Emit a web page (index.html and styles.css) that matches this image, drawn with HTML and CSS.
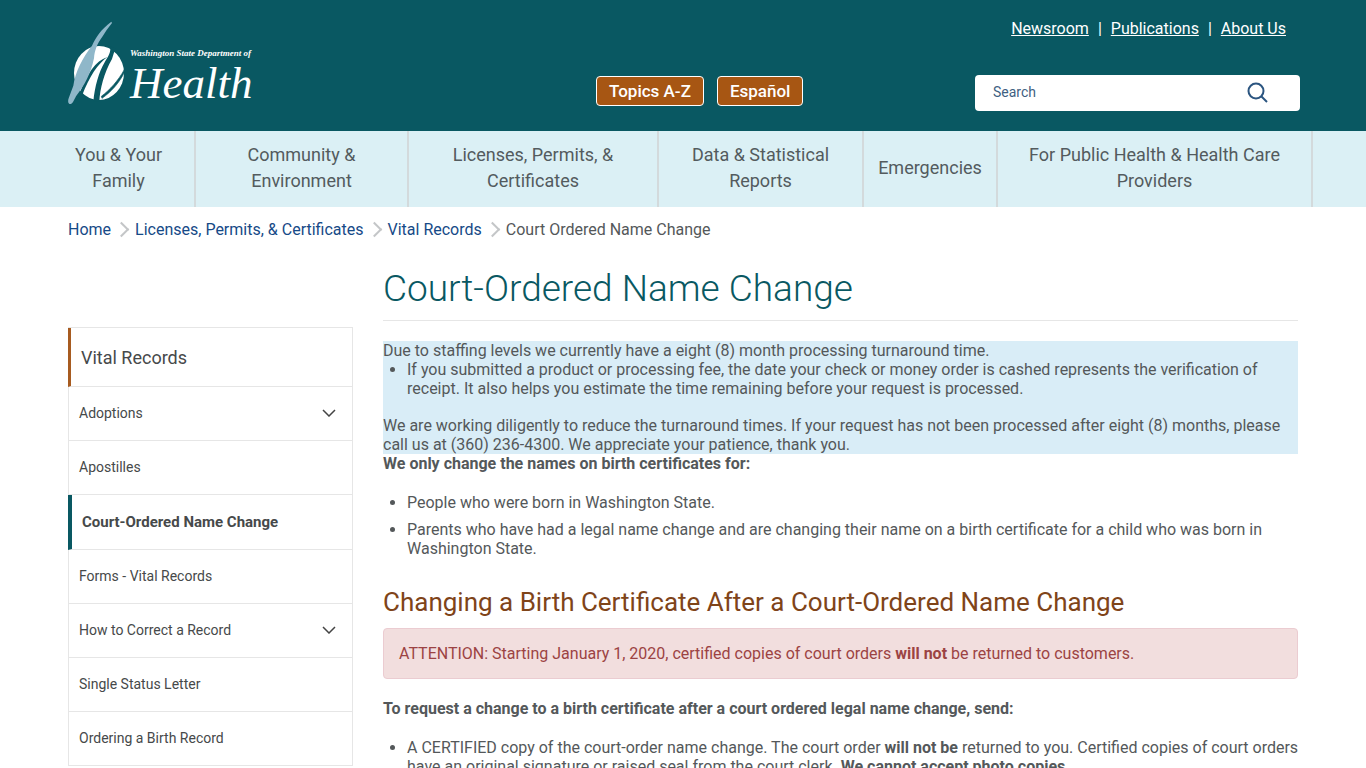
FILE: index.html
```html
<!DOCTYPE html>
<html lang="en">
<head>
    <meta charset="UTF-8">
    <meta name="viewport" content="width=device-width, initial-scale=1.0">
    <title>Court-Ordered Name Change | Washington State Department of Health</title>
    <link rel="stylesheet" href="styles.css">
</head>
<body>
    <header class="site-header">
        <a class="logo" href="#">
            <svg class="logo-mark" viewBox="12 9 168 250" aria-hidden="true">
                <ellipse cx="105" cy="164" rx="75" ry="81" fill="#fff"/>
                <path d="M46 226 C70 166 94 128 130 116 C102 136 76 174 54 232 Z" fill="#095862"/>
                <path d="M138 84 C142 100 134 112 122 132 C104 162 92 206 88 250 L106 250 C108 212 120 164 144 122 L154 90 Z" fill="#095862"/>
                <path d="M182 152 C162 188 138 214 112 234 L114 240 C142 220 166 194 182 160 Z" fill="#095862" stroke="#095862" stroke-width="2"/>
                <path d="M142 10 C110 34 96 56 84 82 C56 118 34 160 28 202 L14 240 C10 252 14 258 20 257 C26 256 30 246 36 234 C62 200 80 168 90 120 C92 98 98 78 116 54 Q126 36 144 14 Z" fill="#8fb7c9"/>
            </svg>
            <span class="logo-text">
                <span class="logo-small">Washington State Department of</span>
                <span class="logo-big">Health</span>
            </span>
        </a>
        <div class="header-buttons">
            <a class="header-btn" href="#">Topics A-Z</a>
            <a class="header-btn" href="#">Español</a>
        </div>
        <div class="header-right">
            <ul class="top-links">
                <li><a href="#">Newsroom</a></li>
                <li><a href="#">Publications</a></li>
                <li><a href="#">About Us</a></li>
            </ul>
            <form class="search">
                <input type="text" placeholder="Search" aria-label="Search">
                <button type="button" aria-label="Submit search">
                    <svg viewBox="0 0 22 22" width="22" height="22"><circle cx="9" cy="9" r="7.5" /><path d="M14 14 L20 20"/></svg>
                </button>
            </form>
        </div>
    </header>

    <nav class="main-nav">
        <a href="#">You &amp; Your Family</a>
        <a href="#">Community &amp; Environment</a>
        <a href="#">Licenses, Permits, &amp; Certificates</a>
        <a href="#">Data &amp; Statistical Reports</a>
        <a href="#">Emergencies</a>
        <a href="#">For Public Health &amp; Health Care Providers</a>
    </nav>

    <ol class="breadcrumb">
        <li><a href="#">Home</a></li>
        <li><a href="#">Licenses, Permits, &amp; Certificates</a></li>
        <li><a href="#">Vital Records</a></li>
        <li>Court Ordered Name Change</li>
    </ol>

    <div class="page">
        <nav class="side-nav">
            <a class="side-title" href="#">Vital Records</a>
            <a href="#">Adoptions <svg viewBox="0 0 14 8"><path d="M1 1 L7 7 L13 1"/></svg></a>
            <a href="#">Apostilles</a>
            <a class="active" href="#">Court-Ordered Name Change</a>
            <a href="#">Forms - Vital Records</a>
            <a href="#">How to Correct a Record <svg viewBox="0 0 14 8"><path d="M1 1 L7 7 L13 1"/></svg></a>
            <a href="#">Single Status Letter</a>
            <a href="#">Ordering a Birth Record</a>
        </nav>

        <main class="content">
            <h1>Court-Ordered Name Change</h1>
            <div class="notice">
                <p>Due to staffing levels we currently have a eight (8) month processing turnaround time.</p>
                <ul>
                    <li>If you submitted a product or processing fee, the date your check or money order is cashed represents the verification of receipt. It also helps you estimate the time remaining before your request is processed.</li>
                </ul>
                <p>We are working diligently to reduce the turnaround times. If your request has not been processed after eight (8) months, please call us at (360) 236-4300. We appreciate your patience, thank you.</p>
            </div>
            <p><strong>We only change the names on birth certificates for:</strong></p>
            <ul class="list">
                <li>People who were born in Washington State.</li>
                <li>Parents who have had a legal name change and are changing their name on a birth certificate for a child who was born in Washington State.</li>
            </ul>
            <h2>Changing a Birth Certificate After a Court-Ordered Name Change</h2>
            <div class="alert">ATTENTION: Starting January 1, 2020, certified copies of court orders <strong>will not</strong> be returned to customers.</div>
            <p><strong>To request a change to a birth certificate after a court ordered legal name change, send:</strong></p>
            <ul class="list">
                <li>A CERTIFIED copy of the court-order name change. The court order <strong>will not be</strong> returned to you. Certified copies of court orders have an original signature or raised seal from the court clerk. <strong>We cannot accept photo copies.</strong></li>
            </ul>
        </main>
    </div>
</body>
</html>
```
FILE: styles.css
```css
* { box-sizing: border-box; }
body { margin: 0; font-family: Roboto, "Liberation Sans", sans-serif; font-size: 16px; line-height: 19px; color: #54585a; background: #fff; }
p { margin: 0; }
ul, ol { margin: 0; padding: 0; }
a { text-decoration: none; }

.site-header { display: grid; grid-template-columns: 528px 1fr 325px; padding: 0 66px 0 68px; min-height: 131px; background: #095862; color: #fff; }
.logo { display: flex; gap: 6px; align-self: start; padding-top: 21px; color: #fff; font-family: "Liberation Serif", serif; font-style: italic; }
.logo-mark { width: 56px; height: 84px; }
.logo-text { display: flex; flex-direction: column; padding-top: 26px; }
.logo-small { font-size: 9px; line-height: 12px; font-weight: bold; white-space: nowrap; }
.logo-big { font-size: 45px; line-height: 48px; }

.header-buttons { display: flex; gap: 13px; align-self: start; padding-top: 76px; }
.header-btn { height: 30px; padding: 0 12px; border: 1px solid #fff; border-radius: 4px; background: #a75613; color: #fff; font-size: 17px; line-height: 28px; font-weight: 500; }

.top-links { display: flex; justify-content: flex-end; list-style: none; padding: 19px 14px 0 0; }
.top-links li + li::before { content: "|"; margin: 0 9px; }
.top-links a { color: #fff; text-decoration: underline; }
.search { display: flex; align-items: center; height: 36px; margin-top: 37px; padding: 0 31px 2px 18px; border-radius: 4px; background: #fff; }
.search input { flex: 1; min-width: 0; padding: 0; border: 0; outline: 0; background: none; font: 14px Roboto, sans-serif; color: #2b4f76; }
.search input::placeholder { color: #3f5f82; opacity: 1; }
.search button { display: flex; padding: 2px 0 0; border: 0; background: none; }
.search svg { fill: none; stroke: #2b5580; stroke-width: 2; }

.main-nav { display: grid; grid-template-columns: 153fr 213fr 250fr 205fr 134fr 315fr; padding: 0 53px 0 43px; min-height: 76px; background: #dbf0f5; }
.main-nav a { display: flex; align-items: center; justify-content: center; padding: 0 12px 2px; border-right: 2px solid #d3dadc; color: #535b5e; font-size: 18px; line-height: 26px; text-align: center; }

.breadcrumb { display: flex; list-style: none; padding: 13px 68px 0; }
.breadcrumb li { display: flex; align-items: center; }
.breadcrumb li + li::before { content: ""; width: 9px; height: 9px; margin: 0 9px 0 6px; border: solid #c4c6c8; border-width: 2px 2px 0 0; transform: rotate(45deg); }
.breadcrumb li + li::before { margin: 0 8px 0 5px; }
.breadcrumb a { color: #164a87; }

.page { display: grid; grid-template-columns: 285px 1fr; align-items: start; gap: 30px; padding: 0 68px; }
.side-nav { margin-top: 88px; border: 1px solid #e6e6e6; border-width: 1px 1px 0 0; }
.side-nav a { display: flex; align-items: center; justify-content: space-between; height: 54px; padding: 0 16px 0 10px; border-bottom: 1px solid #e6e6e6; border-left: 1px solid #e6e6e6; color: #46494a; font-size: 14px; }
.side-nav .side-title { height: 59px; border-left: 3px solid #a75b20; font-size: 18px; }
.side-nav .active { height: 55px; border-left: 4px solid #095862; font-size: 15px; font-weight: bold; }
.side-nav svg { width: 14px; height: 8px; margin-bottom: 2px; fill: none; stroke: #444; stroke-width: 1.5; }

h1 { margin: 28px 0 20px; padding-bottom: 9px; border-bottom: 1px solid #e6e6e6; color: #095862; font-size: 37px; line-height: 44px; font-weight: 300; }
h2 { margin: 28px 0 9px; color: #7f4419; font-size: 26px; line-height: 33px; font-weight: 400; }
.content ul { padding-left: 24px; }
.notice { background: #d9edf7; }
.notice ul { margin-bottom: 18px; }
.list { margin: 20px -4px 20px 0; }
.list li { margin-bottom: 8px; }
.alert { margin-bottom: 20px; padding: 15px; border: 1px solid #ebccd1; border-radius: 4px; background: #f2dede; color: #9c4343; }
```
